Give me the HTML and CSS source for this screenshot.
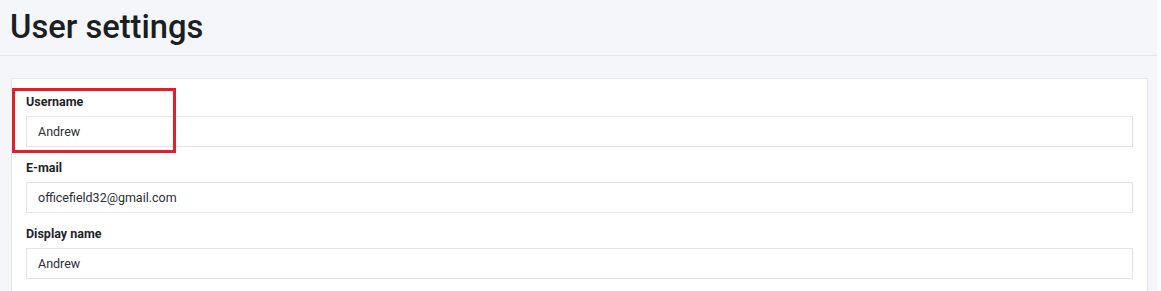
FILE: index.html
```html
<!DOCTYPE html>
<html lang="en">
<head>
<meta charset="utf-8">
<title>User settings</title>
<link rel="stylesheet" href="styles.css">
</head>
<body>
<div class="page">
  <header class="page-header">
    <h1 class="page-title">User settings</h1>
  </header>
  <main class="content">
    <section class="card">
      <div class="field">
        <label class="field-label">Username</label>
        <div class="field-input">Andrew</div>
      </div>
      <div class="field">
        <label class="field-label">E-mail</label>
        <div class="field-input">officefield32@gmail.com</div>
      </div>
      <div class="field">
        <label class="field-label">Display name</label>
        <div class="field-input">Andrew</div>
      </div>
    </section>
  </main>
  <div class="highlight"></div>
</div>
</body>
</html>
```

FILE: styles.css
```css
* { box-sizing: border-box; }
html, body {
  margin: 0;
  padding: 0;
  height: 100%;
  overflow: hidden;
  background: #fbfbfc;
  font-family: Roboto, "Liberation Sans", Arial, sans-serif;
}
.page {
  position: relative;
  width: 1157px;
  height: 100%;
  background: #f4f6fa;
}
.page-header {
  height: 56px;
  padding: 8px 0 0 10px;
  border-bottom: 1px solid #e4e6ea;
}
.page-title {
  margin: 0;
  font-size: 32.7px;
  line-height: 39px;
  font-weight: 500;
  color: #1b1e23;
}
.content {
  padding: 22px 9px 0 11px;
}
.card {
  background: #ffffff;
  border: 1px solid #e5e7ea;
  padding: 15px 14px 20px 14px;
}
.field {
  display: flex;
  flex-direction: column;
  margin-bottom: 13px;
}
.field-label {
  font-size: 12.5px;
  line-height: 16px;
  font-weight: 700;
  color: #1f2329;
  margin-bottom: 6px;
}
.field-input {
  height: 31px;
  border: 1px solid #e2e4e7;
  padding: 0 11px;
  display: flex;
  align-items: center;
  font-size: 12.5px;
  color: #2b2f35;
  background: #fff;
}
.highlight {
  position: absolute;
  left: 12px;
  top: 88px;
  width: 164px;
  height: 65px;
  border: 3px solid #e91c2c;
}
```
